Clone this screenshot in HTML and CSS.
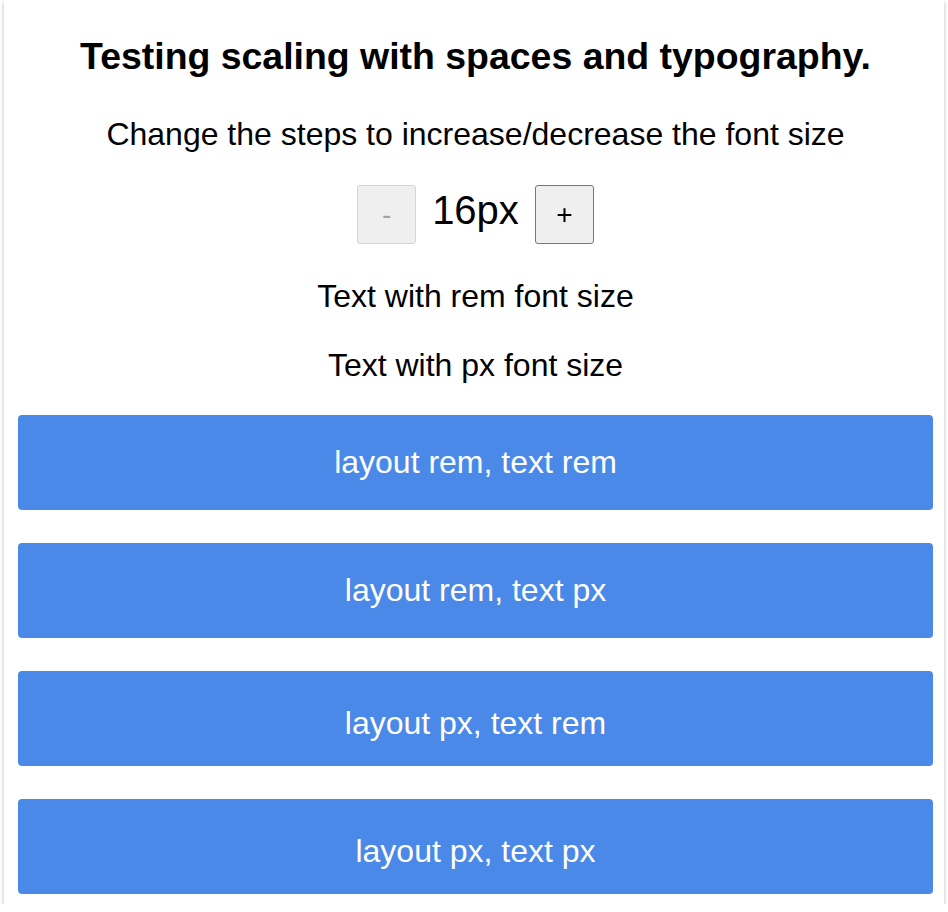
FILE: index.html
```html
<!DOCTYPE html>
<html lang="en">
<head>
<meta charset="utf-8">
<title>Scaling test</title>
<link rel="stylesheet" href="styles.css">
</head>
<body>
<main class="card">
  <h3 class="title">Testing scaling with spaces and typography.</h3>
  <p class="subtitle">Change the steps to increase/decrease the font size</p>
  <div class="counter">
    <button class="step" disabled>-</button>
    <span class="size">16px</span>
    <button class="step">+</button>
  </div>
  <p class="line line-rem">Text with rem font size</p>
  <p class="line line-px">Text with px font size</p>
  <div class="boxes">
    <div class="box">layout rem, text rem</div>
    <div class="box">layout rem, text px</div>
    <div class="box box-px">layout px, text rem</div>
    <div class="box box-px">layout px, text px</div>
  </div>
</main>
</body>
</html>
```

FILE: styles.css
```css
html, body {
  margin: 0;
  padding: 0;
  background: #ffffff;
}

body {
  font-family: "Liberation Sans", Arial, Helvetica, sans-serif;
  color: #000000;
}

.card {
  box-sizing: border-box;
  width: 940px;
  height: 904px;
  margin-left: 4px;
  padding: 35px 11px 10px 14px;
  background: #ffffff;
  box-shadow: 0 2px 4px rgba(0, 0, 0, 0.28);
  display: flex;
  flex-direction: column;
  align-items: stretch;
  text-align: center;
}

.title {
  margin: 0;
  font-size: 37.44px;
  font-weight: 700;
  line-height: normal;
}

.subtitle {
  margin: 38px 0 0;
  font-size: 32px;
  line-height: normal;
}

.counter {
  margin-top: 32px;
  display: flex;
  justify-content: center;
  align-items: baseline;
  gap: 16px;
}

.step {
  box-sizing: border-box;
  width: 59px;
  height: 59px;
  padding: 0;
  font-family: "Liberation Sans", Arial, sans-serif;
  font-size: 28px;
  color: #000000;
  background: #efefef;
  border: 1px solid #767676;
  border-radius: 3px;
}

.step:disabled {
  color: #a3a3a3;
  border-color: #d4d4d4;
}

.size {
  font-size: 40px;
  line-height: normal;
}

.line {
  margin: 34px 0 0;
  font-size: 32px;
  line-height: normal;
}

.line-px {
  margin-top: 32px;
}

.boxes {
  margin-top: 31px;
  display: flex;
  flex-direction: column;
  gap: 33px;
}

.box {
  box-sizing: border-box;
  height: 95px;
  display: flex;
  align-items: center;
  justify-content: center;
  background: #4b89e8;
  color: #ffffff;
  font-size: 32px;
  border-radius: 4px;
}

.box-px {
  padding-top: 10px;
}
```
